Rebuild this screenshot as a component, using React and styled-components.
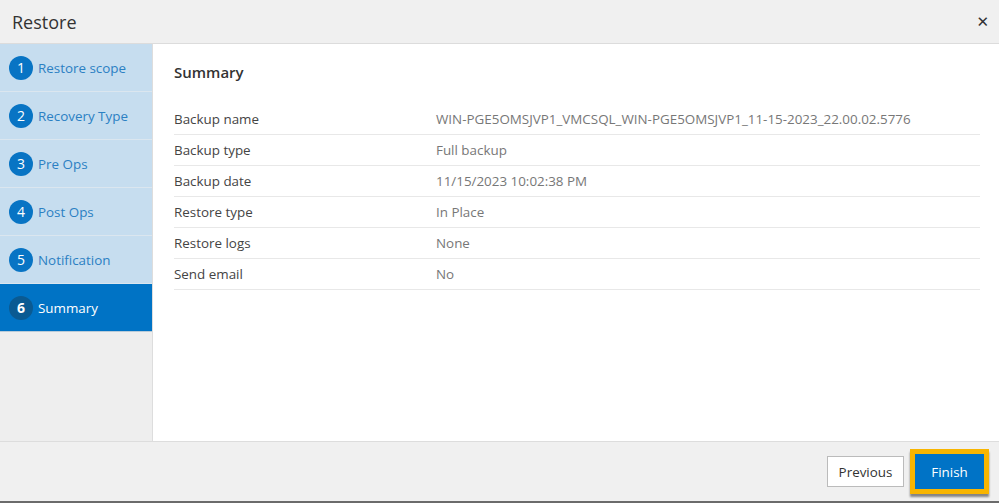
import React from "react";
import styled, { createGlobalStyle } from "styled-components";

const Global = createGlobalStyle`
  html, body { margin: 0; padding: 0; background: #ffffff; }
  body { font-family: "Open Sans", "Liberation Sans", sans-serif; }
  * { box-sizing: border-box; }
`;

const Dialog = styled.div`
  width: 999px;
  height: 503px;
  display: flex;
  flex-direction: column;
  background: #ffffff;
  border-bottom: 2px solid #6b6b6b;
  overflow: hidden;
`;

const Header = styled.div`
  height: 44px;
  flex: none;
  display: flex;
  align-items: center;
  justify-content: space-between;
  padding: 0 10px 0 12px;
  background: #f0f0f0;
  border-bottom: 1px solid #dcdcdc;
`;

const Title = styled.h1`
  margin: 0;
  font-size: 18px;
  font-weight: 400;
  color: #333333;
  line-height: 44px;
`;

const Close = styled.span`
  font-family: "DejaVu Sans", sans-serif;
  font-size: 15px;
  font-weight: 700;
  color: #333333;
`;

const Body = styled.div`
  flex: 1;
  display: flex;
  min-height: 0;
`;

const Sidebar = styled.nav`
  width: 153px;
  flex: none;
  background: #eeeeee;
  border-right: 1px solid #dddddd;
  display: flex;
  flex-direction: column;
`;

const Step = styled.div`
  height: 48px;
  display: flex;
  align-items: center;
  gap: 5px;
  padding-left: 9px;
  background: ${(p) => (p.$active ? "#0073c5" : "#c6ddef")};
  border-bottom: 1px solid ${(p) => (p.$active ? "#b9cbd8" : "#dbe6ef")};
  color: ${(p) => (p.$active ? "#ffffff" : "#2b80c3")};
  font-size: 13.4px;
`;

const Num = styled.span`
  width: 24px;
  height: 24px;
  border-radius: 50%;
  background: ${(p) => (p.$active ? "#0a5a92" : "#0874c4")};
  color: #ffffff;
  display: flex;
  align-items: center;
  justify-content: center;
  font-size: 14px;
  font-weight: ${(p) => (p.$active ? 700 : 400)};
`;

const Main = styled.main`
  flex: 1;
  padding: 18px 19px 0 21px;
`;

const Heading = styled.h2`
  margin: 0 0 22px 0;
  font-size: 15px;
  font-weight: 600;
  color: #333333;
  line-height: 20px;
`;

const Table = styled.div`
  display: flex;
  flex-direction: column;
`;

const Row = styled.div`
  display: grid;
  grid-template-columns: 262px 1fr;
  height: 31px;
  align-items: center;
  border-bottom: 1px solid #e8e8e8;
  font-size: 13.4px;
`;

const Label = styled.span`
  color: #444444;
`;

const Value = styled.span`
  color: #777777;
`;

const Footer = styled.div`
  height: 60px;
  flex: none;
  background: #f0f0f0;
  border-top: 1px solid #dddddd;
  display: flex;
  align-items: center;
  justify-content: flex-end;
  gap: 6px;
  padding-right: 10px;
`;

const Button = styled.button`
  font-family: inherit;
  font-size: 13.4px;
  width: 77px;
  height: 31px;
  padding: 0;
  background: #ffffff;
  color: #333333;
  border: 1px solid #bbbbbb;
  border-radius: 0;
`;

const Highlight = styled.div`
  padding: 5px;
  background: #f8b500;
  box-shadow: 0 3px 2px rgba(0, 0, 0, 0.45);
  display: flex;
`;

const Primary = styled.button`
  font-family: inherit;
  font-size: 13.4px;
  width: 69px;
  height: 35px;
  background: #0073c6;
  color: #ffffff;
  border: none;
  border-radius: 0;
`;

const steps = ["Restore scope", "Recovery Type", "Pre Ops", "Post Ops", "Notification", "Summary"];

const rows = [
  ["Backup name", "WIN-PGE5OMSJVP1_VMCSQL_WIN-PGE5OMSJVP1_11-15-2023_22.00.02.5776"],
  ["Backup type", "Full backup"],
  ["Backup date", "11/15/2023 10:02:38 PM"],
  ["Restore type", "In Place"],
  ["Restore logs", "None"],
  ["Send email", "No"],
];

export default function App() {
  return (
    <>
      <Global />
      <Dialog>
        <Header>
          <Title>Restore</Title>
          <Close>✕</Close>
        </Header>
        <Body>
          <Sidebar>
            {steps.map((s, i) => (
              <Step key={s} $active={i === 5}>
                <Num $active={i === 5}>{i + 1}</Num>
                {s}
              </Step>
            ))}
          </Sidebar>
          <Main>
            <Heading>Summary</Heading>
            <Table>
              {rows.map(([l, v]) => (
                <Row key={l}>
                  <Label>{l}</Label>
                  <Value>{v}</Value>
                </Row>
              ))}
            </Table>
          </Main>
        </Body>
        <Footer>
          <Button>Previous</Button>
          <Highlight>
            <Primary>Finish</Primary>
          </Highlight>
        </Footer>
      </Dialog>
    </>
  );
}
